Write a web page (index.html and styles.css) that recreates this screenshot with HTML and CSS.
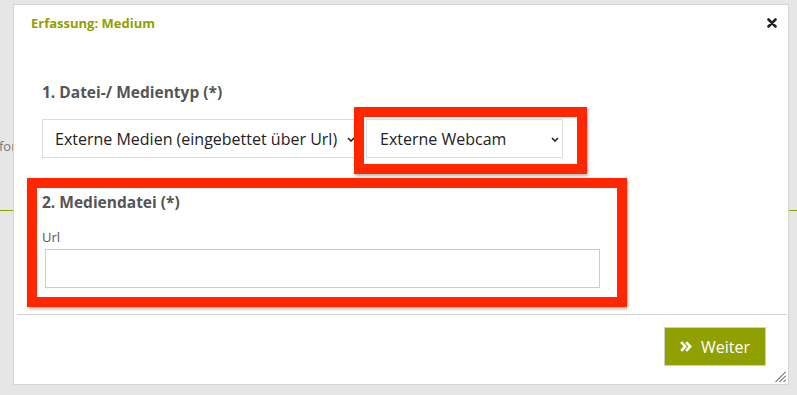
FILE: index.html
```html
<!DOCTYPE html>
<html lang="de">
<head>
    <meta charset="UTF-8">
    <meta name="viewport" content="width=device-width, initial-scale=1.0">
    <title>Erfassung: Medium</title>
    <link rel="stylesheet" href="styles.css">
</head>
<body>
    <div class="page">
        <p class="page-text">for</p>
        <hr class="page-line">
    </div>

    <div class="dialog">
        <div class="dialog-title">
            <span class="title-text">Erfassung: Medium</span>
            <button class="close" title="Schliessen">
                <svg width="10" height="10" viewBox="0 0 10 10"><path d="M1.5 1.5 L8.5 8.5 M8.5 1.5 L1.5 8.5" stroke="#222" stroke-width="2.6" stroke-linecap="round"/></svg>
            </button>
        </div>

        <div class="dialog-content">
            <h3 class="step">1. Datei-/ Medientyp (*)</h3>
            <div class="select-row">
                <span class="select-wrap">
                    <select class="field-select select-type">
                        <option>Externe Medien (eingebettet über Url)</option>
                    </select>
                    <svg class="chevron" width="8" height="5" viewBox="0 0 8 5"><path d="M1 1 L4 4 L7 1" stroke="#222" stroke-width="1.6" fill="none"/></svg>
                </span>
                <span class="mark mark-select">
                    <span class="select-wrap">
                        <select class="field-select select-source">
                            <option>Externe Webcam</option>
                        </select>
                        <svg class="chevron" width="8" height="5" viewBox="0 0 8 5"><path d="M1 1 L4 4 L7 1" stroke="#222" stroke-width="1.6" fill="none"/></svg>
                    </span>
                </span>
            </div>

            <div class="mark mark-section">
                <h3 class="step">2. Mediendatei (*)</h3>
                <label class="field-label" for="url">Url</label>
                <input class="field-input" type="text" id="url">
            </div>
        </div>

        <div class="dialog-buttons">
            <button class="btn-next">
                <svg width="12" height="11" viewBox="0 0 12 11"><path d="M1.2 1.2 L5.2 5.5 L1.2 9.8 M6.2 1.2 L10.2 5.5 L6.2 9.8" stroke="#fff" stroke-width="2.6" fill="none"/></svg>
                Weiter
            </button>
        </div>

        <svg class="resize" width="11" height="11" viewBox="0 0 11 11"><path d="M0.5 11 L11 0.5 M4.5 11 L11 4.5 M8.5 11 L11 8.5" stroke="#333" stroke-width="1"/></svg>
    </div>
</body>
</html>
```

FILE: styles.css
```css
body {
    margin: 0;
    background-color: #e6e6e6;
    font-family: "Open Sans", Arial, sans-serif;
    color: #555;
}
.page {
    height: 395px;
    padding-top: 136px;
    box-sizing: border-box;
}
.page-text {
    margin: 0 0 0 -1px;
    font-size: 13px;
    line-height: 20px;
    color: #777;
}
.page-line {
    margin: 54px 0 0;
    border: none;
    border-top: 1px solid #8fa000;
}
.dialog {
    position: absolute;
    left: 13px;
    top: 4px;
    width: 776px;
    height: 381px;
    box-sizing: border-box;
    background: white;
    border: 1px solid #d4d4d4;
    display: flex;
    flex-direction: column;
}
.dialog-title {
    display: flex;
    justify-content: space-between;
    align-items: center;
    padding: 9px 11px 0 17px;
}
.title-text {
    font-size: 13px;
    font-weight: bold;
    line-height: 18px;
    color: #8fa000;
}
.close {
    border: none;
    background: none;
    padding: 0;
    width: 10px;
    height: 10px;
    display: flex;
    cursor: pointer;
}
.dialog-content {
    flex: 1;
    padding: 0 28px;
}
.step {
    margin: 0;
    font-size: 15.5px;
    font-weight: bold;
    line-height: 20px;
    color: #555;
}
.dialog-content > .step {
    margin-top: 50px;
}
.select-row {
    display: flex;
    align-items: flex-start;
    margin-top: 17px;
}
.select-wrap {
    position: relative;
    display: block;
}
.field-select {
    appearance: none;
    -webkit-appearance: none;
    display: block;
    height: 39px;
    box-sizing: border-box;
    border: 1px solid #dcdcdc;
    border-radius: 0;
    background: white;
    font-family: "Open Sans", Arial, sans-serif;
    font-size: 16px;
    color: #222;
    margin: 0;
}
.select-type {
    width: 316px;
    padding: 0 20px 0 12px;
}
.select-source {
    width: 197px;
    padding: 0 20px 0 13px;
}
.chevron {
    position: absolute;
    right: 4px;
    top: 18px;
}
.select-type + .chevron {
    right: 3px;
}
.mark {
    border: 10px solid #ff2600;
    box-shadow: 1px 2px 3px rgba(0, 0, 0, 0.3);
    box-sizing: border-box;
}
.mark-select {
    display: block;
    position: relative;
    margin: -12px 0 0 -4px;
    padding: 2px 14px 6px 2px;
}
.mark-section {
    width: 600px;
    margin: 4px 0 0 -15px;
    padding: 4px 0 9px 5px;
}
.field-label {
    display: block;
    margin-top: 16px;
    font-size: 13px;
    line-height: 18px;
    color: #555;
}
.field-input {
    display: block;
    width: 555px;
    height: 39px;
    box-sizing: border-box;
    margin: 3px 0 0 3px;
    border: 1px solid #cccccc;
    font-family: "Open Sans", Arial, sans-serif;
    font-size: 16px;
    padding: 0 8px;
}
.dialog-buttons {
    display: flex;
    justify-content: flex-end;
    margin: 0 1px 0 3px;
    padding: 12px 21px 18px 0;
    border-top: 1px solid #d0d5d5;
}
.btn-next {
    display: flex;
    align-items: center;
    gap: 9px;
    width: 102px;
    height: 39px;
    box-sizing: border-box;
    padding: 0 0 0 15px;
    border: 1px solid #cdd0c8;
    background-color: #8fa000;
    color: white;
    font-family: "Open Sans", Arial, sans-serif;
    font-size: 16px;
    cursor: pointer;
}
.resize {
    position: absolute;
    right: 2px;
    bottom: 2px;
}
```
